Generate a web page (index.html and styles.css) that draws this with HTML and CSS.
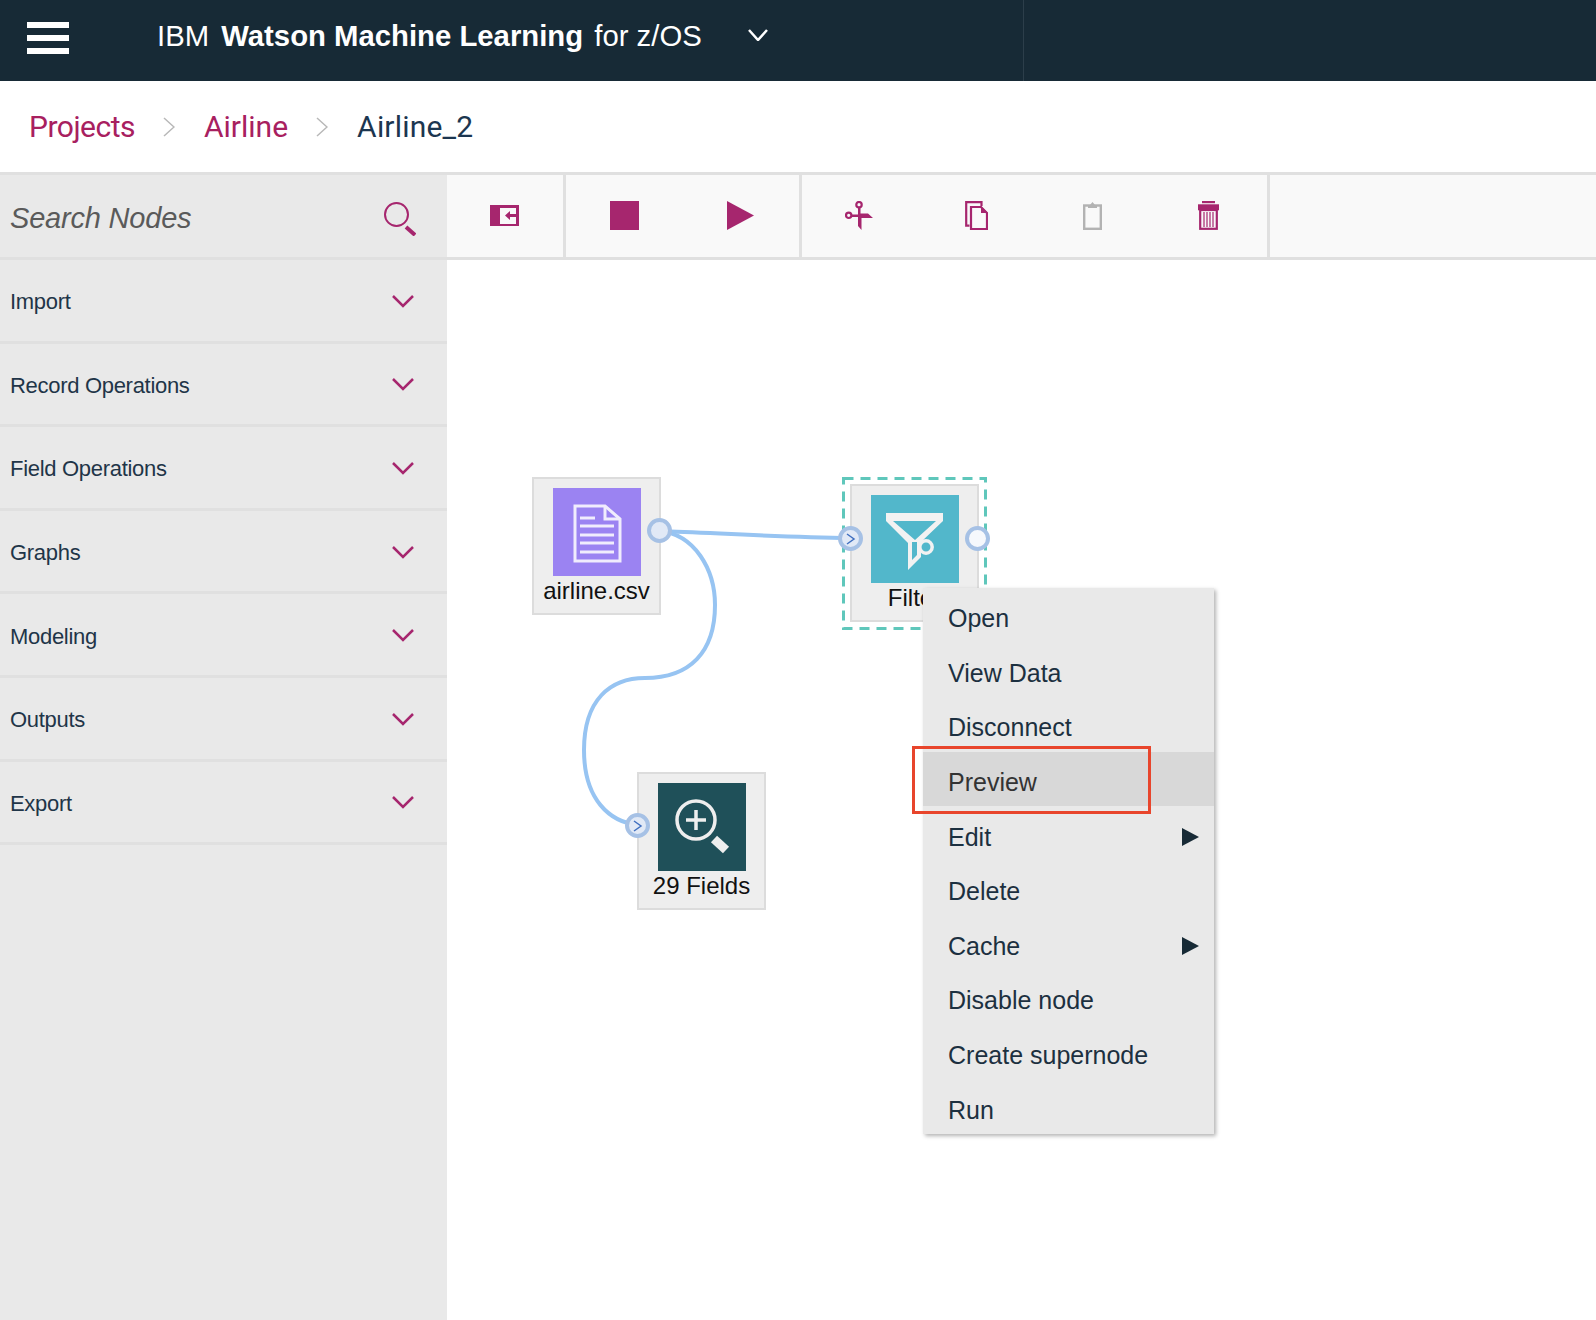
FILE: index.html
```html
<!DOCTYPE html>
<html lang="en">
<head>
    <meta charset="UTF-8">
    <meta name="viewport" content="width=device-width, initial-scale=1.0">
    <title>IBM Watson Machine Learning for z/OS</title>
    <link rel="stylesheet" href="styles.css">
</head>
<body>
    <!-- Top bar -->
    <header class="topbar">
        <div class="hamburger"><span></span><span></span><span></span></div>
        <div class="brand">IBM <b>Watson Machine Learning</b> for z/OS</div>
        <svg class="brand-chevron" viewBox="0 0 20 12"><path d="M1 1l9 10 9-10"/></svg>
        <div class="topbar-rule"></div>
    </header>

    <!-- Breadcrumbs -->
    <nav class="crumbs">
        <a href="#">Projects</a>
        <svg class="crumb-sep" viewBox="0 0 12 20"><path d="M1 1l10 9-10 9"/></svg>
        <a href="#">Airline</a>
        <svg class="crumb-sep" viewBox="0 0 12 20"><path d="M1 1l10 9-10 9"/></svg>
        <span class="crumb-current">Airline_2</span>
    </nav>

    <main class="workspace">
        <!-- Node palette -->
        <aside class="palette">
            <div class="search-row">
                <span class="search-label">Search Nodes</span>
                <svg class="search-icon" viewBox="0 0 33 34">
                    <circle cx="13.5" cy="12.5" r="11.5"/>
                    <path class="handle" d="M23 25l9 8"/>
                </svg>
            </div>
            <div class="palette-row"><span>Import</span><svg class="chevron" viewBox="0 0 22 13"><path d="M1 1l10 10L21 1"/></svg></div>
            <div class="palette-row"><span>Record Operations</span><svg class="chevron" viewBox="0 0 22 13"><path d="M1 1l10 10L21 1"/></svg></div>
            <div class="palette-row"><span>Field Operations</span><svg class="chevron" viewBox="0 0 22 13"><path d="M1 1l10 10L21 1"/></svg></div>
            <div class="palette-row"><span>Graphs</span><svg class="chevron" viewBox="0 0 22 13"><path d="M1 1l10 10L21 1"/></svg></div>
            <div class="palette-row"><span>Modeling</span><svg class="chevron" viewBox="0 0 22 13"><path d="M1 1l10 10L21 1"/></svg></div>
            <div class="palette-row"><span>Outputs</span><svg class="chevron" viewBox="0 0 22 13"><path d="M1 1l10 10L21 1"/></svg></div>
            <div class="palette-row"><span>Export</span><svg class="chevron" viewBox="0 0 22 13"><path d="M1 1l10 10L21 1"/></svg></div>
        </aside>

        <section class="flow-area">
            <!-- Toolbar -->
            <div class="toolbar">
                <div class="tool-group">
                    <div class="tool tool-nudge">
                        <svg width="29" height="21" viewBox="0 0 29 21">
                            <rect class="fill" width="29" height="21"/>
                            <rect x="10" y="3" width="16" height="16" fill="#f9f9f9"/>
                            <path class="fill" d="M15 10.5l5-4.5v3h6v3h-6v3z"/>
                        </svg>
                    </div>
                </div>
                <div class="tool-group">
                    <div class="tool"><svg width="29" height="29" viewBox="0 0 29 29"><rect class="fill" width="29" height="29"/></svg></div>
                    <div class="tool"><svg width="27" height="29" viewBox="0 0 27 29"><path class="fill" d="M0 0l27 14.500L0 29z"/></svg></div>
                </div>
                <div class="tool-group">
                    <div class="tool tool-nudge">
                        <svg width="28" height="29" viewBox="0 0 28 29">
                            <circle class="line" cx="14" cy="3.700" r="2.700"/>
                            <circle class="line" cx="3.700" cy="14.300" r="2.700"/>
                            <path class="fill" d="M6 13.500H13V6H15.500V12.500H23L28 17H16.500V29L13 25V16H6Z"/>
                        </svg>
                    </div>
                    <div class="tool">
                        <svg width="23" height="29" viewBox="0 0 23 29">
                            <path class="line" d="M4.500 24.700H1.200V1.200H16.500V5"/>
                            <path class="line" d="M6 6H16L22 12V28H6Z"/>
                            <path class="fill" d="M16 5L23 12H16Z"/>
                        </svg>
                    </div>
                    <div class="tool">
                        <svg width="19" height="29" viewBox="0 0 19 29">
                            <rect class="line-off" x="1.200" y="4.500" width="16.600" height="23.300"/>
                            <path class="fill-off" d="M5 7V4H7L9.500 1 12 4H14V7Z"/>
                        </svg>
                    </div>
                    <div class="tool">
                        <svg width="21" height="29" viewBox="0 0 21 29">
                            <rect class="fill" x="4" width="13" height="2.200"/>
                            <rect class="fill" y="3.300" width="21" height="6"/>
                            <rect class="line" x="2.200" y="9" width="16.600" height="18.800"/>
                            <path class="thin" d="M6 11v15M9 11v15M12 11v15M15 11v15"/>
                        </svg>
                    </div>
                </div>
            </div>

            <!-- Flow canvas -->
            <div class="canvas">
                <svg class="wires" width="1149" height="1060">
                    <path d="M212 271C270 273 330 277 404 278"/>
                    <path d="M212 271C248 274 268 310 268 345C268 392 243 418 198 418C163 418 137 440 137 490C137 540 163 562 191 565"/>
                </svg>

                <div class="node node-csv">
                    <div class="node-icon icon-purple">
                        <svg width="88" height="88" viewBox="0 0 88 88">
                            <path class="glyph" d="M22 18h30l15 13v42H22z"/>
                            <path class="glyph" d="M52 18v13h15"/>
                            <path class="glyph" d="M27 30h15M27 38h34M27 47h34M27 55h34M27 64h34"/>
                        </svg>
                    </div>
                    <div class="node-label">airline.csv</div>
                </div>

                <svg class="selection" width="145" height="153">
                    <rect x="1.500" y="1.500" width="142" height="150"/>
                </svg>
                <div class="node node-filter">
                    <div class="node-icon icon-teal">
                        <svg width="88" height="88" viewBox="0 0 88 88">
                            <path fill="#f2f2f2" fill-rule="evenodd" d="M15 18H72V26L50 47V62L37 75V48L15 26ZM22 26H65L44 45ZM41 47H46V60L41 65Z"/>
                            <circle class="glyph-ring" cx="55" cy="52" r="6.200"/>
                        </svg>
                    </div>
                    <div class="node-label">Filter</div>
                </div>

                <div class="node node-fields">
                    <div class="node-icon icon-dark">
                        <svg width="88" height="88" viewBox="0 0 88 88">
                            <circle class="glyph-lens" cx="38" cy="37" r="19"/>
                            <path class="glyph-lens" d="M28 37h20M38 27v20"/>
                            <path class="glyph-handle" d="M56 56l12 11"/>
                        </svg>
                    </div>
                    <div class="node-label">29 Fields</div>
                </div>

                <div class="port port-out-csv"></div>
                <div class="port port-in port-in-filter"><svg viewBox="0 0 10 12"><path d="M1 1l7 5-7 5"/></svg></div>
                <div class="port port-out-filter"></div>
                <div class="port port-in port-in-fields"><svg viewBox="0 0 10 12"><path d="M1 1l7 5-7 5"/></svg></div>

                <!-- Context menu -->
                <ul class="context-menu">
                    <li>Open</li>
                    <li>View Data</li>
                    <li>Disconnect</li>
                    <li class="active">Preview</li>
                    <li>Edit<i class="submenu-arrow"></i></li>
                    <li>Delete</li>
                    <li>Cache<i class="submenu-arrow"></i></li>
                    <li>Disable node</li>
                    <li>Create supernode</li>
                    <li>Run</li>
                </ul>
                <div class="callout"></div>
            </div>
        </section>
    </main>
</body>
</html>
```

FILE: styles.css
```css
* {
    box-sizing: border-box;
}

body {
    margin: 0;
    height: 1320px;
    overflow: hidden;
    font-family: "Liberation Sans", Arial, sans-serif;
    background: #ffffff;
    color: #1c3040;
    display: flex;
    flex-direction: column;
}

/* top bar */
.topbar {
    height: 81px;
    background: #172a36;
    color: #ffffff;
    display: flex;
    align-items: flex-start;
    position: relative;
    flex-shrink: 0;
}

.hamburger {
    margin: 22px 0 0 27px;
    width: 42px;
    height: 32px;
    display: flex;
    flex-direction: column;
    justify-content: space-between;
}

.hamburger span {
    display: block;
    height: 6px;
    background: #ffffff;
}

.brand {
    margin: 18px 0 0 88px;
    font-size: 29.300px;
    line-height: 36px;
    white-space: pre;
}

.brand b {
    margin: 0 3px 0 4px;
}

.brand-chevron {
    margin: 29px 0 0 46px;
    width: 20px;
    height: 12px;
    fill: none;
    stroke: #ffffff;
    stroke-width: 2.5;
}

.topbar-rule {
    position: absolute;
    left: 1023px;
    top: 0;
    bottom: 0;
    width: 1px;
    background: #2c3e4a;
}

/* breadcrumbs */
.crumbs {
    height: 91px;
    padding-left: 29px;
    display: flex;
    align-items: center;
    font-family: Roboto, "Liberation Sans", sans-serif;
    font-size: 30px;
    flex-shrink: 0;
}

.crumbs a {
    color: #a8205f;
    text-decoration: none;
}

.crumbs a:first-child {
    letter-spacing: -0.5px;
}

.crumb-sep {
    width: 12px;
    height: 20px;
    margin: 0 29px 0 28px;
    fill: none;
    stroke: #b8b8b8;
    stroke-width: 1.5;
}

.crumb-current {
    color: #1c3650;
    letter-spacing: 0.2px;
}

/* layout below the breadcrumbs */
.workspace {
    flex: 1;
    display: flex;
    border-top: 3px solid #e0e0e0;
}

.palette {
    width: 447px;
    background: #e9e9e9;
    flex-shrink: 0;
}

.search-row {
    height: 85px;
    padding: 4px 31px 0 10px;
    border-bottom: 3px solid #e0e0e0;
    display: flex;
    align-items: center;
    justify-content: space-between;
}

.search-label {
    font-style: italic;
    font-size: 29px;
    letter-spacing: -0.2px;
    color: #5a5a5a;
}

.search-icon {
    width: 33px;
    height: 34px;
    margin-top: 2px;
    fill: none;
    stroke: #a6266e;
    stroke-width: 2;
}

.search-icon .handle {
    stroke-width: 4;
}

.palette-row {
    height: 83.600px;
    padding: 4px 33px 0 10px;
    border-bottom: 3px solid #e0e0e0;
    display: flex;
    align-items: center;
    justify-content: space-between;
    font-size: 22px;
    letter-spacing: -0.3px;
    color: #1f3548;
}

.chevron {
    width: 22px;
    height: 13px;
    margin-bottom: 2px;
    fill: none;
    stroke: #a6266e;
    stroke-width: 2.5;
}

/* toolbar */
.flow-area {
    flex: 1;
    display: flex;
    flex-direction: column;
}

.toolbar {
    height: 85px;
    background: #f9f9f9;
    border-bottom: 3px solid #e0e0e0;
    display: flex;
    flex-shrink: 0;
}

.tool-group {
    display: flex;
    border-right: 3px solid #e0e0e0;
}

.tool {
    width: 116.250px;
    padding-bottom: 1px;
    display: flex;
    align-items: center;
    justify-content: center;
}

.tool-nudge {
    padding-right: 2px;
}

.tool .fill {
    fill: #a6266e;
}

.tool .line {
    fill: none;
    stroke: #a6266e;
    stroke-width: 2.200;
}

.tool .thin {
    fill: none;
    stroke: #a6266e;
    stroke-width: 1.200;
}

.tool .line-off {
    fill: none;
    stroke: #b3b3b3;
    stroke-width: 2.400;
}

.tool .fill-off {
    fill: #b3b3b3;
}

/* canvas */
.canvas {
    flex: 1;
    position: relative;
}

.wires {
    position: absolute;
    left: 0;
    top: 0;
    fill: none;
    stroke: #97c4f2;
    stroke-width: 4;
}

.node {
    position: absolute;
    width: 129px;
    height: 138px;
    padding-top: 9px;
    background: #eeeeee;
    border: 2px solid #dcdcdc;
    display: flex;
    flex-direction: column;
    align-items: center;
}

.node-csv {
    left: 85px;
    top: 217px;
}

.node-filter {
    left: 403px;
    top: 224px;
}

.node-fields {
    left: 190px;
    top: 512px;
}

.node-icon {
    width: 88px;
    height: 88px;
    flex-shrink: 0;
}

.node-icon svg {
    display: block;
}

.icon-purple {
    background: #9b83f2;
}

.icon-teal {
    background: #52b7cb;
}

.icon-dark {
    background: #1f5059;
}

.glyph {
    fill: none;
    stroke: #f0ecfd;
    stroke-width: 3;
}

.glyph-ring {
    fill: #52b7cb;
    stroke: #f2f2f2;
    stroke-width: 3.500;
}

.glyph-lens {
    fill: none;
    stroke: #eeeeee;
    stroke-width: 3.500;
}

.glyph-handle {
    fill: none;
    stroke: #eeeeee;
    stroke-width: 9;
}

.node-label {
    margin-top: 1px;
    font-size: 24px;
    line-height: 28px;
    color: #111111;
    white-space: nowrap;
}

.selection {
    position: absolute;
    left: 395px;
    top: 217px;
}

.selection rect {
    fill: none;
    stroke: #5fc7bb;
    stroke-width: 3;
    stroke-dasharray: 10 7;
}

.port {
    position: absolute;
    width: 25px;
    height: 25px;
    border-radius: 50%;
    border: 4px solid #a6c1e5;
    background: #f6f8fc;
    display: flex;
    align-items: center;
    justify-content: center;
}

.port-in,
.port-out-csv {
    background: #e1e9f6;
}

.port svg {
    width: 10px;
    height: 12px;
    fill: none;
    stroke: #3f6fc0;
    stroke-width: 1.500;
}

.port-out-csv {
    left: 200px;
    top: 258px;
}

.port-in-filter {
    left: 391px;
    top: 266px;
}

.port-out-filter {
    left: 518px;
    top: 266px;
}

.port-in-fields {
    left: 178px;
    top: 553px;
}

/* context menu */
.context-menu {
    position: absolute;
    left: 476px;
    top: 328px;
    width: 291px;
    height: 546px;
    margin: 0;
    padding: 0;
    list-style: none;
    background: #e9e9e9;
    box-shadow: 2px 2px 4px rgba(0, 0, 0, 0.3);
    font-size: 25px;
    color: #1c3040;
}

.context-menu li {
    height: 54.600px;
    padding: 7px 15px 0 25px;
    display: flex;
    align-items: center;
    justify-content: space-between;
}

.context-menu li.active {
    background: #d8d8d8;
    color: #333333;
}

.submenu-arrow {
    width: 0;
    height: 0;
    border-left: 17px solid #172a36;
    border-top: 9px solid transparent;
    border-bottom: 9px solid transparent;
}

.callout {
    position: absolute;
    left: 465px;
    top: 486px;
    width: 239px;
    height: 68px;
    border: 3px solid #e8452c;
}
```
